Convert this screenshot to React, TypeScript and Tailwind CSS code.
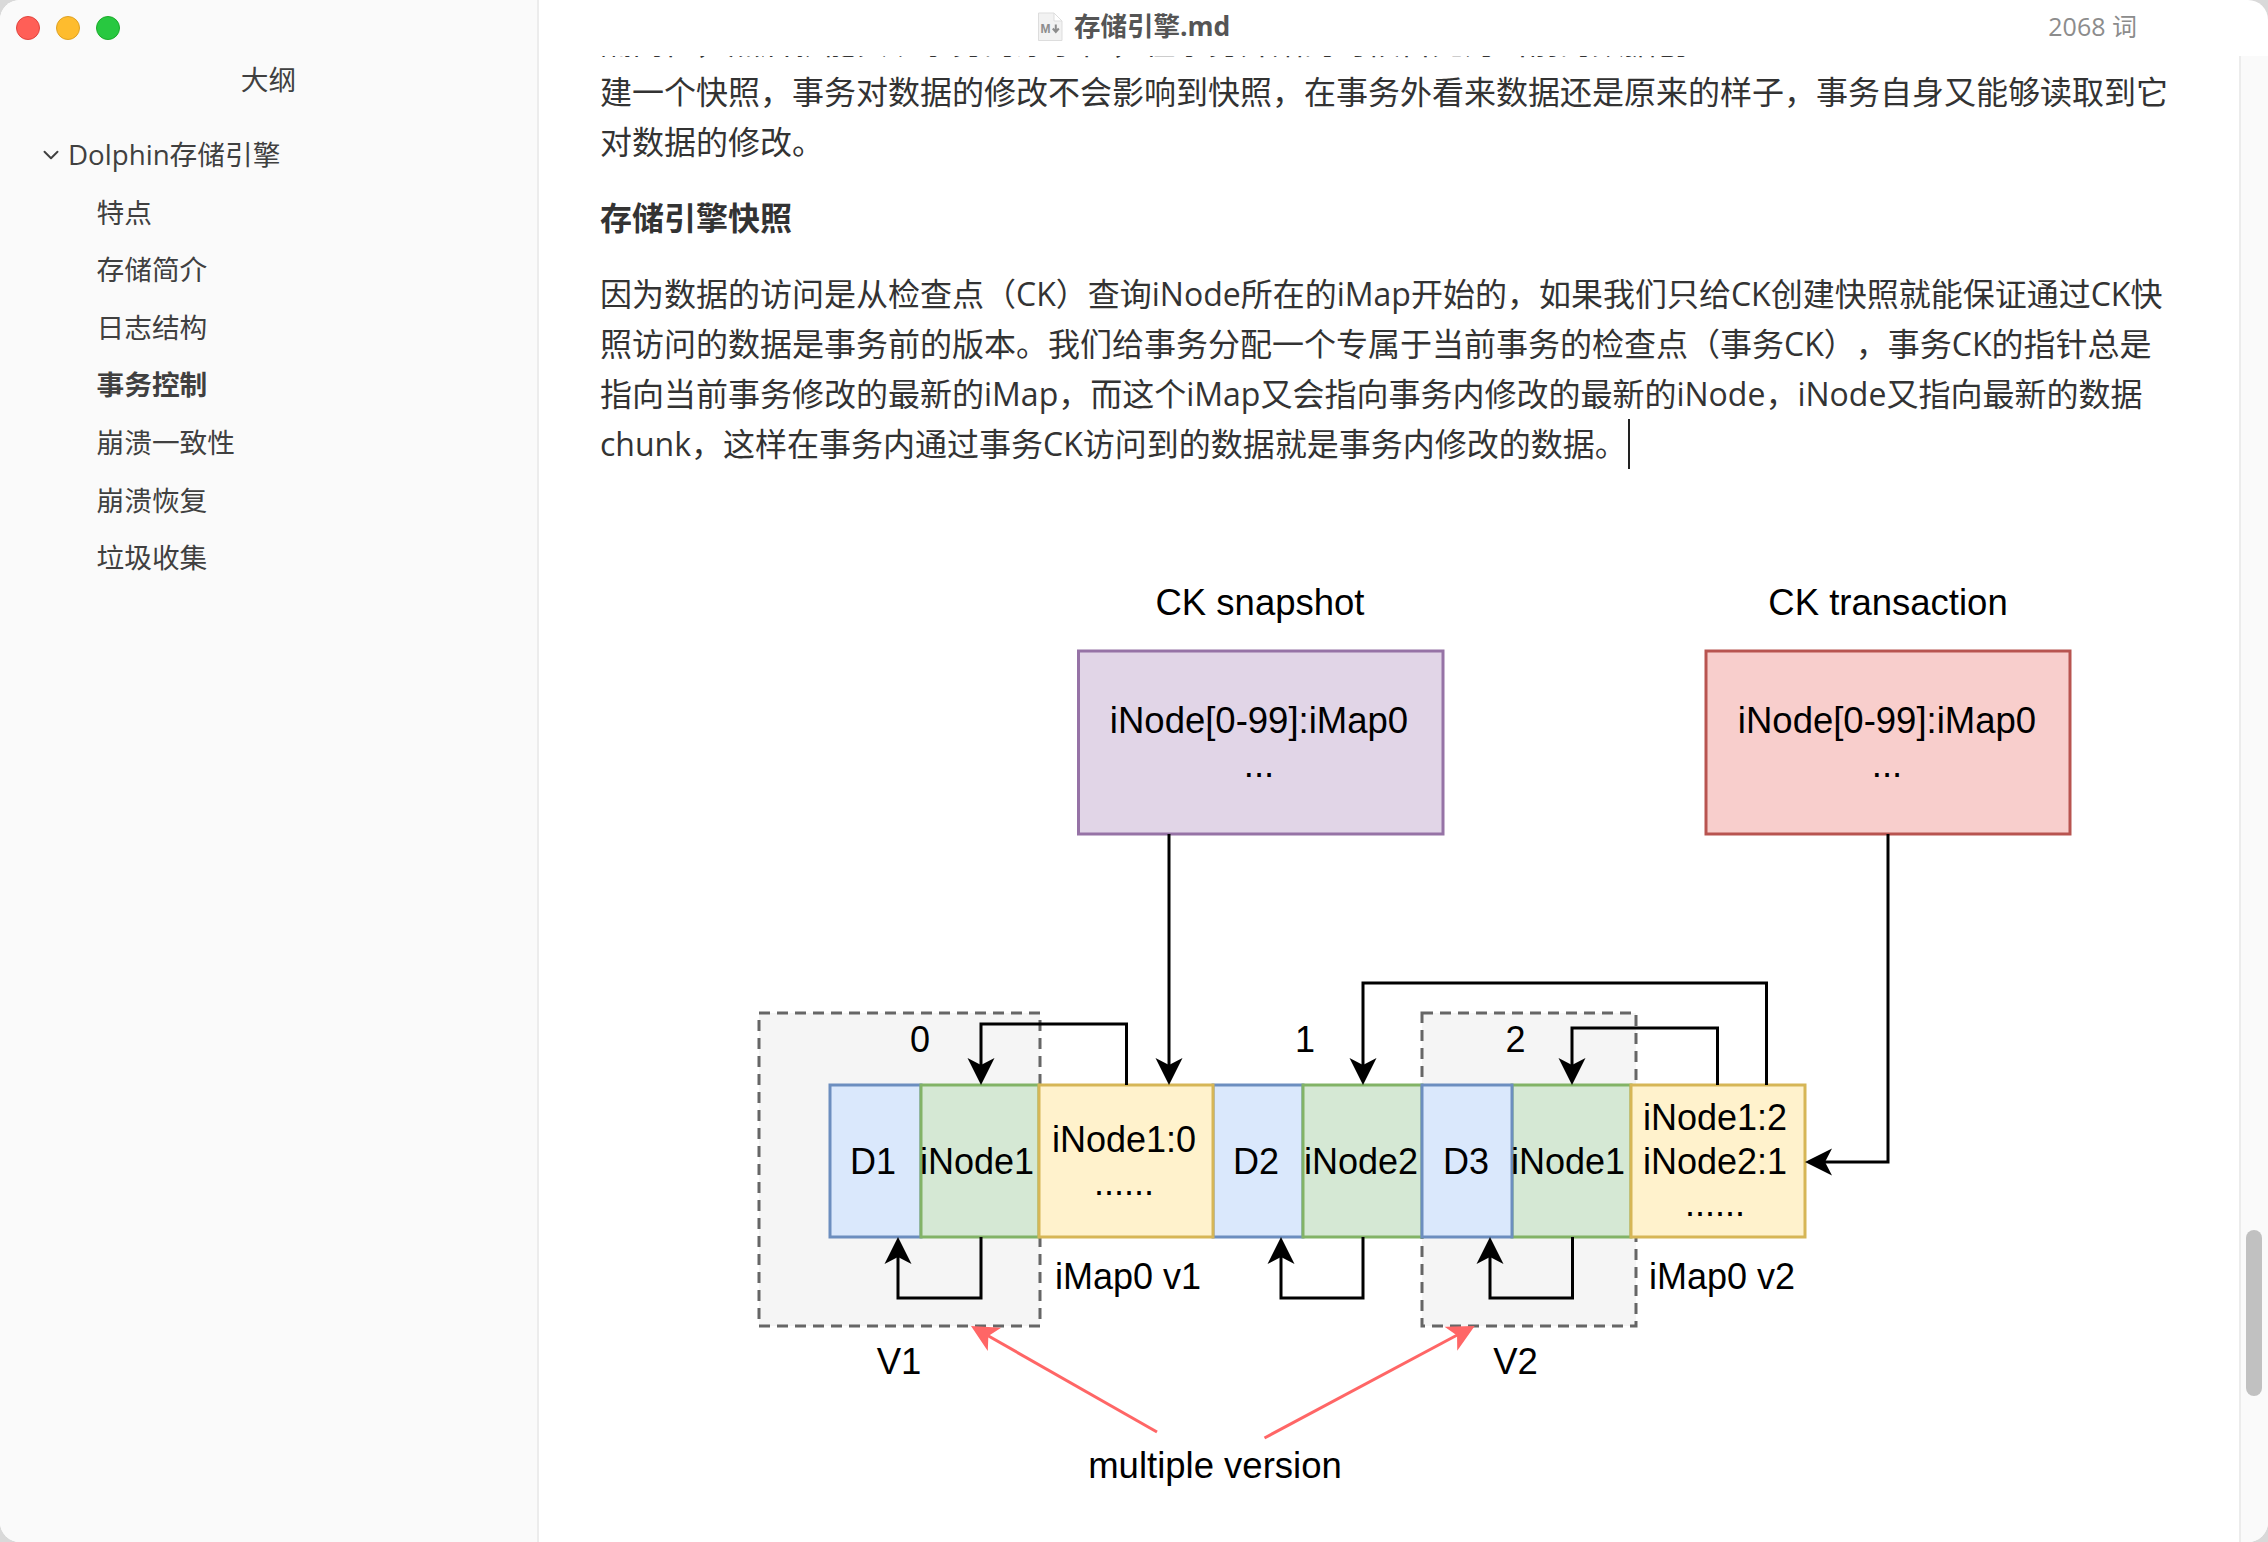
import { ChevronDown } from "lucide-react";

const OUTLINE = ["特点", "存储简介", "日志结构", "事务控制", "崩溃一致性", "崩溃恢复", "垃圾收集"];

const SANS = "font-['Open_Sans','Noto_Sans_CJK_SC',sans-serif]";

// draw.io style arrow head, rotation 0 points down
function Head({ x, y, a, color = "#000" }: { x: number; y: number; a: number; color?: string }) {
  return <polygon points="0,0 -13.5,-27 0,-20 13.5,-27" fill={color} transform={`translate(${x} ${y}) rotate(${a})`} />;
}

function Wire({ d }: { d: string }) {
  return <path d={d} fill="none" stroke="#000" strokeWidth="3" />;
}

function Box({ x, y, w, h, fill, stroke }: { x: number; y: number; w: number; h: number; fill: string; stroke: string }) {
  return <rect x={x} y={y} width={w} height={h} fill={fill} stroke={stroke} strokeWidth="3" />;
}

function Label({ x, y, size = 36.5, children }: { x: number; y: number; size?: number; children: string }) {
  return (
    <text x={x} y={y} fontSize={size} textAnchor="middle" fill="#000">
      {children}
    </text>
  );
}

function Diagram() {
  return (
    <svg
      viewBox="600 560 1566 982"
      className="block h-[982px] w-[1566px] font-['Liberation_Sans',Arial,sans-serif]"
    >
      <rect x="759" y="1013" width="281" height="313" fill="#f5f5f5" stroke="#666" strokeWidth="3" strokeDasharray="11 7" />
      <rect x="1422" y="1013" width="214" height="313" fill="#f5f5f5" stroke="#666" strokeWidth="3" strokeDasharray="11 7" />

      <Box x={1078.5} y={651} w={364.5} h={183} fill="#e1d5e7" stroke="#9673a6" />
      <Box x={1706} y={651} w={364} h={183} fill="#f8cecc" stroke="#b85450" />

      <Box x={830} y={1085} w={91} h={152} fill="#dae8fc" stroke="#6c8ebf" />
      <Box x={1213} y={1085} w={90} h={152} fill="#dae8fc" stroke="#6c8ebf" />
      <Box x={921} y={1085} w={118} h={152} fill="#d5e8d4" stroke="#82b366" />
      <Box x={1303} y={1085} w={119} h={152} fill="#d5e8d4" stroke="#82b366" />
      <Box x={1512} y={1085} w={119} h={152} fill="#d5e8d4" stroke="#82b366" />
      <Box x={1422} y={1085} w={90} h={152} fill="#dae8fc" stroke="#6c8ebf" />
      <Box x={1039} y={1085} w={174} h={152} fill="#fff2cc" stroke="#d6b656" />
      <Box x={1631} y={1085} w={174} h={152} fill="#fff2cc" stroke="#d6b656" />

      <Wire d="M1169 834V1070" />
      <Head x={1169} y={1085} a={0} />
      <Wire d="M1888 834V1162H1820" />
      <Head x={1805} y={1162} a={90} />

      <Wire d="M1126.5 1085V1024H981V1070" />
      <Head x={981} y={1085} a={0} />
      <Wire d="M981 1237V1298H898V1252" />
      <Head x={898} y={1237} a={180} />

      <Wire d="M1766.5 1085V983H1363V1070" />
      <Head x={1363} y={1085} a={0} />
      <Wire d="M1363 1237V1298H1281V1252" />
      <Head x={1281} y={1237} a={180} />

      <Wire d="M1717.5 1085V1028H1572V1070" />
      <Head x={1572} y={1085} a={0} />
      <Wire d="M1572.5 1237V1298H1490V1252" />
      <Head x={1490} y={1237} a={180} />

      <line x1="1157" y1="1432" x2="985" y2="1334" stroke="#ff6666" strokeWidth="3" />
      <Head x={971} y={1326} a={119.7} color="#ff6666" />
      <line x1="1264.5" y1="1438" x2="1461" y2="1333" stroke="#ff6666" strokeWidth="3" />
      <Head x={1474.7} y={1326} a={-118.1} color="#ff6666" />

      <Label x={1260} y={615}>CK snapshot</Label>
      <Label x={1888} y={615}>CK transaction</Label>
      <Label x={1259} y={733}>iNode[0-99]:iMap0</Label>
      <Label x={1259} y={777}>...</Label>
      <Label x={1887} y={733}>iNode[0-99]:iMap0</Label>
      <Label x={1887} y={777}>...</Label>

      <Label x={920} y={1052} size={36}>0</Label>
      <Label x={1305} y={1052} size={36}>1</Label>
      <Label x={1515.5} y={1052} size={36}>2</Label>

      <Label x={873} y={1174} size={36}>D1</Label>
      <Label x={977} y={1174} size={36}>iNode1</Label>
      <Label x={1124} y={1152} size={36}>iNode1:0</Label>
      <Label x={1124} y={1195} size={36}>......</Label>
      <Label x={1256} y={1174} size={36}>D2</Label>
      <Label x={1361} y={1174} size={36}>iNode2</Label>
      <Label x={1466} y={1174} size={36}>D3</Label>
      <Label x={1568} y={1174} size={36}>iNode1</Label>
      <Label x={1715} y={1130} size={36}>iNode1:2</Label>
      <Label x={1715} y={1174} size={36}>iNode2:1</Label>
      <Label x={1715} y={1216} size={36}>......</Label>

      <Label x={1128} y={1289} size={36}>iMap0 v1</Label>
      <Label x={1722} y={1289} size={36}>iMap0 v2</Label>
      <Label x={899} y={1374}>V1</Label>
      <Label x={1515.5} y={1374}>V2</Label>
      <Label x={1215} y={1478}>multiple version</Label>
    </svg>
  );
}

function MdFileIcon() {
  return (
    <svg width="26" height="30" viewBox="0 0 26 30" className="shrink-0">
      <path d="M1.5 1H17L25 9V28.5H1.5Z" fill="#f2f2f2" stroke="#dddddd" />
      <path d="M17 1V9H25Z" fill="#ffffff" stroke="#dddddd" />
      <text x="3.5" y="20.5" fontSize="12" fontWeight="700" fill="#8c8c8c" className="font-['Liberation_Sans',sans-serif]">
        M
      </text>
      <path d="M18.8 12.5V19.5M15.8 16.5L18.8 20L21.8 16.5" fill="none" stroke="#8c8c8c" strokeWidth="2" />
    </svg>
  );
}

export default function App() {
  return (
    <div className={`h-screen w-screen overflow-hidden bg-[#d9d9d9] ${SANS}`}>
      <div className="flex h-full w-full overflow-hidden rounded-[20px] bg-white">
        <aside className="flex w-[539px] shrink-0 flex-col border-r-2 border-[#ececec] bg-[#fafafa] text-[27.7px] text-[#404040]">
          <div className="flex gap-4 pl-4 pt-[16px]">
            <span className="h-6 w-6 rounded-full border border-[#e0443e] bg-[#ff5f57]" />
            <span className="h-6 w-6 rounded-full border border-[#dea123] bg-[#febc2e]" />
            <span className="h-6 w-6 rounded-full border border-[#1aab29] bg-[#28c840]" />
          </div>
          <div className="mt-[15px] flex h-[50px] items-center justify-center">大纲</div>
          <ul className="mt-[21px]">
            <li className="flex h-[57.6px] items-center pl-[38px]">
              <ChevronDown size={26} strokeWidth={1.8} className="mr-[4px] shrink-0" />
              <span>Dolphin存储引擎</span>
            </li>
            {OUTLINE.map((item) => (
              <li
                key={item}
                className={`flex h-[57.6px] items-center pl-[96.5px] ${item === "事务控制" ? "font-bold" : ""}`}
              >
                {item}
              </li>
            ))}
          </ul>
        </aside>

        <main className="flex min-w-0 flex-1 flex-col">
          <header className="flex h-14 shrink-0 items-center justify-between pb-[2px] pl-[498px] pr-[131px]">
            <div className="flex items-center gap-[11px] text-[26.5px] font-bold text-[#555555]">
              <MdFileIcon />
              <span>存储引擎.md</span>
            </div>
            <span className="text-[25px] text-[#8c8c8c]">2068 词</span>
          </header>

          <div className="flex min-h-0 flex-1">
            <div className="min-w-0 flex-1 overflow-hidden pl-[61px]">
              <article className="-mt-[39px] whitespace-nowrap text-[32px] leading-[50px] text-[#333333] [text-spacing-trim:space-all]">
                <p>
                  隔离性，然后就能实现事务的原子性，在事务开始的时候首先为当前的数据创
                  <br />
                  建一个快照，事务对数据的修改不会影响到快照，在事务外看来数据还是原来的样子，事务自身又能够读取到它
                  <br />
                  对数据的修改。
                </p>
                <h4 className="mt-[26px] font-bold">存储引擎快照</h4>
                <p className="mt-[26px]">
                  因为数据的访问是从检查点（CK）查询iNode所在的iMap开始的，如果我们只给CK创建快照就能保证通过CK快
                  <br />
                  照访问的数据是事务前的版本。我们给事务分配一个专属于当前事务的检查点（事务CK），事务CK的指针总是
                  <br />
                  指向当前事务修改的最新的iMap，而这个iMap又会指向事务内修改的最新的iNode，iNode又指向最新的数据
                  <br />
                  chunk，这样在事务内通过事务CK访问到的数据就是事务内修改的数据。
                  <span className="ml-px inline-block h-[50px] w-[2px] bg-[#222222] align-top" />
                </p>
                <div className="mt-[91px]">
                  <Diagram />
                </div>
              </article>
            </div>
            <div className="w-[29px] shrink-0 border-l-2 border-[#ececec] bg-[#fafafa] pl-[5px] pt-[1174px]">
              <div className="h-[166px] w-4 rounded-lg bg-[#c1c1c1]" />
            </div>
          </div>
        </main>
      </div>
    </div>
  );
}
